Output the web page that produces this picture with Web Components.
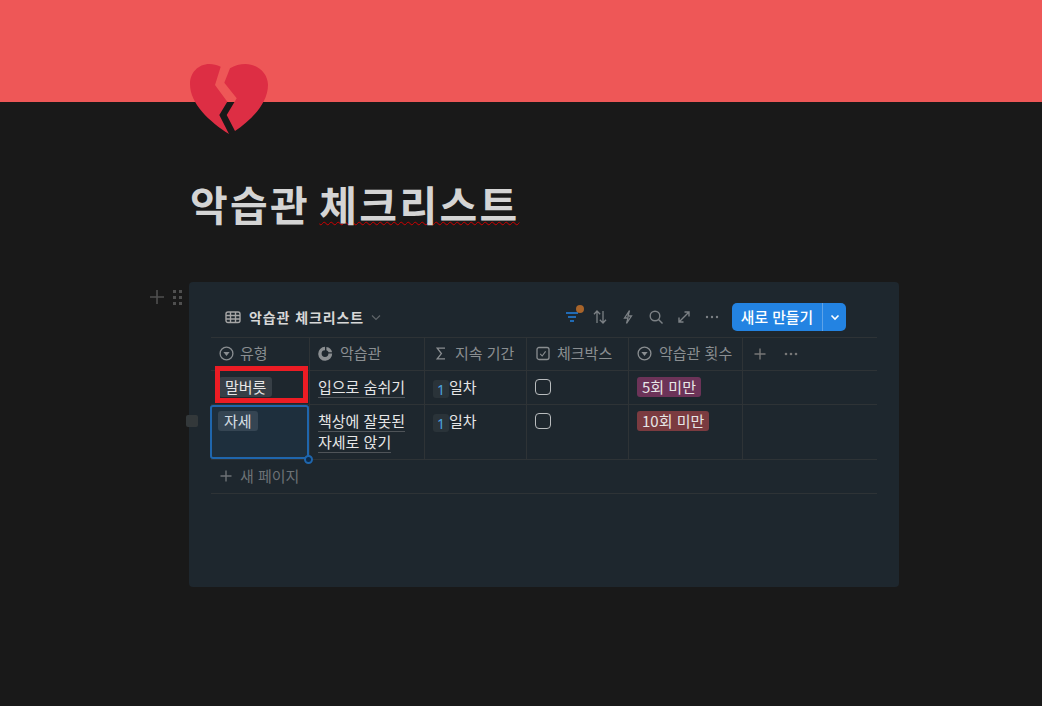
<!DOCTYPE html>
<html lang="ko">
<head>
<meta charset="utf-8">
<title>악습관 체크리스트</title>
<style>
    html, body { margin: 0; height: 100%; background: #191919; overflow: hidden; }
    body { font-family: 'Noto Sans CJK KR', 'Noto Sans', sans-serif; color: #d4d4d4; }
</style>
</head>
<body>
<page-cover></page-cover>
<page-title></page-title>
<db-block>
    <db-toolbar></db-toolbar>
    <db-table></db-table>
</db-block>

<script>
const FONT = "'Noto Sans CJK KR', 'Noto Sans', sans-serif";

const ICONS = {
    select: `<svg width="15" height="15" viewBox="0 0 15 15"><circle cx="7.5" cy="7.5" r="6.4" fill="none" stroke="currentColor" stroke-width="1.3"/><path d="M4.4 6h6.2L7.5 10z" fill="currentColor"/></svg>`,
    rollup: `<svg width="15" height="15" viewBox="0 0 15 15"><path d="M7 .8v3.4a3.4 3.4 0 1 0 3.4 3.4h3.8A7 7 0 1 1 7 .8z" fill="currentColor"/><path d="M8.4 .9a6.6 6.6 0 0 1 5.7 5.4h-3.5a3.3 3.3 0 0 0-2.2-2z" fill="currentColor"/></svg>`,
    sigma: `<svg width="15" height="15" viewBox="0 0 15 15"><path d="M12 2.200H4.200L8.400 7.600l-4.200 5.200H12" fill="none" stroke="currentColor" stroke-width="1.3"/></svg>`,
    check: `<svg width="15" height="15" viewBox="0 0 15 15"><rect x="2" y="1.500" width="12" height="12" rx="2" fill="none" stroke="currentColor" stroke-width="1.3"/><path d="M5.200 7.800l2 2.200 3.400-4.600" fill="none" stroke="currentColor" stroke-width="1.100"/></svg>`
};

// Cover band with the page icon hanging over its lower edge
class PageCover extends HTMLElement {
    constructor() {
        super();
        this.attachShadow({ mode: 'open' });
        this.shadowRoot.innerHTML = `
            <style>
                :host { display: block; height: 102px; background: #ee5757; position: relative; }
                svg { position: absolute; left: 190px; top: 64px; }
            </style>
            <svg width="78" height="71" viewBox="0 0 78 71">
                <path fill="#dd2e44" d="M30.700 2.700C27 .8 23 0 19.500 0 8 0 0 9 0 20 0 40 20 58 39 70L29.300 51 37.300 37.700 25 21z"/>
                <path fill="#dd2e44" d="M40 4.300C44.500 1.500 50 0 55.500 0 68 0 78 9.500 78 21 78 40 60 57 45 67L36.700 51 46.700 34.300 34.300 18.700z"/>
            </svg>`;
    }
}
customElements.define('page-cover', PageCover);

class PageTitle extends HTMLElement {
    constructor() {
        super();
        this.attachShadow({ mode: 'open' });
        this.shadowRoot.innerHTML = `
            <style>
                :host {
                    display: block;
                    padding: 72px 0 0 190px;
                    height: 108px;
                    font: 700 41px/58px ${FONT};
                    letter-spacing: 2.3px;
                    word-spacing: -4.500px;
                    color: #d4d4d4;
                }
                span { text-decoration: underline wavy #d00000 1.3px; text-underline-offset: 0; text-decoration-skip-ink: none; }
            </style>
            악습관 <span>체크리스트</span>`;
    }
}
customElements.define('page-title', PageTitle);

// Dark card that holds the toolbar and the table, with the hover handle at its left
class DbBlock extends HTMLElement {
    constructor() {
        super();
        this.attachShadow({ mode: 'open' });
        this.shadowRoot.innerHTML = `
            <style>
                :host {
                    display: block;
                    box-sizing: border-box;
                    width: 710px;
                    height: 305px;
                    margin-left: 189px;
                    padding: 21px 22px 0;
                    background: #1e272e;
                    border-radius: 4px;
                    position: relative;
                }
                .handle { position: absolute; left: -40px; top: 6px; display: flex; gap: 7px; color: #4f4f4f; }
            </style>
            <div class="handle">
                <svg width="16" height="18" viewBox="0 0 16 18"><path d="M8 2v14M1 9h14" stroke="currentColor" stroke-width="1.6"/></svg>
                <svg width="10" height="18" viewBox="0 0 10 18" fill="currentColor">
                    <rect x="1" y="2" width="3" height="3"/><rect x="7" y="2" width="3" height="3"/>
                    <rect x="1" y="8" width="3" height="3"/><rect x="7" y="8" width="3" height="3"/>
                    <rect x="1" y="14" width="3" height="3"/><rect x="7" y="14" width="3" height="3"/>
                </svg>
            </div>
            <slot></slot>`;
    }
}
customElements.define('db-block', DbBlock);

class DbToolbar extends HTMLElement {
    constructor() {
        super();
        this.attachShadow({ mode: 'open' });
        this.shadowRoot.innerHTML = `
            <style>
                :host {
                    display: flex;
                    align-items: center;
                    height: 28px;
                    margin-bottom: 6px;
                    padding-left: 14px;
                    font-family: ${FONT};
                    color: #7c8185;
                }
                .view { display: flex; align-items: center; gap: 8px; font-size: 14px; font-weight: 700; letter-spacing: .9px; color: #d8d8d8; }
                .view svg { color: #a5a5a5; }
                .view .caret { color: #5f6468; margin-left: -2px; }
                .tools { margin-left: auto; display: flex; align-items: center; gap: 12px; }
                .filter { position: relative; display: flex; }
                .dot { position: absolute; right: -4px; top: -4px; width: 8px; height: 8px; border-radius: 50%; background: #a8642a; }
                .btn {
                    display: flex;
                    align-items: center;
                    height: 28px;
                    background: #2383e2;
                    border-radius: 5px;
                    color: #fff;
                    font-size: 14.8px;
                    font-weight: 500;
                }
                .btn span { padding: 0 9px; border-right: 1px solid #5ea3e8; line-height: 27px; height: 28px; }
                .btn svg { margin: 0 6.500px; }
                .end { width: 31px; }
            </style>
            <div class="view">
                <svg width="16" height="14" viewBox="0 0 16 14" fill="none" stroke="currentColor" stroke-width="1.4"><rect x="1" y="2" width="14" height="10.500" rx="2"/><path d="M1 5.500h14M1 9h14M5.500 2v10.500M10.500 2v10.500"/></svg>
                <span>악습관 체크리스트</span>
                <svg class="caret" width="12" height="12" viewBox="0 0 12 12" fill="none" stroke="currentColor" stroke-width="1.2"><path d="M2 4.500l4 4 4-4"/></svg>
            </div>
            <div class="tools">
                <div class="filter">
                    <svg width="16" height="16" viewBox="0 0 16 16" fill="none" stroke="#2383e2" stroke-width="1.5"><path d="M2 4h12M4 8h8M6 12h4"/></svg>
                    <i class="dot"></i>
                </div>
                <svg width="16" height="16" viewBox="0 0 16 16" fill="none" stroke="currentColor" stroke-width="1.3"><path d="M5 14V2M2 5.200L5 2l3.200 3.200M11 2v12M7.800 10.800L11 14l3 -3.200"/></svg>
                <svg width="16" height="16" viewBox="0 0 16 16" fill="none" stroke="currentColor" stroke-width="1.3"><path d="M9.500 1.500L4.500 9H8l-1.500 5.500L11.500 7H8z"/></svg>
                <svg width="16" height="16" viewBox="0 0 16 16" fill="none" stroke="currentColor" stroke-width="1.4"><circle cx="7" cy="7" r="4.800"/><path d="M10.500 10.500L14.500 14.500"/></svg>
                <svg width="16" height="16" viewBox="0 0 16 16" fill="none" stroke="currentColor" stroke-width="1.4"><path d="M3 13L13 3M8.500 3H13v4.500M3 8.500V13h4.500"/></svg>
                <svg width="16" height="16" viewBox="0 0 16 16" fill="currentColor"><circle cx="3" cy="8" r="1.200"/><circle cx="8" cy="8" r="1.200"/><circle cx="13" cy="8" r="1.200"/></svg>
                <div class="btn">
                    <span>새로 만들기</span>
                    <svg width="10" height="10" viewBox="0 0 10 10" fill="none" stroke="#fff" stroke-width="1.6"><path d="M1.500 3.500L5 7l3.500-3.500"/></svg>
                </div>
            </div>
            <div class="end"></div>`;
    }
}
customElements.define('db-toolbar', DbToolbar);

class TagPill extends HTMLElement {
    constructor() {
        super();
        this.attachShadow({ mode: 'open' });
        this.shadowRoot.innerHTML = `
            <style>
                :host {
                    display: inline-block;
                    vertical-align: top;
                    padding: 0 var(--pad, 6px);
                    height: 20px;
                    line-height: 19px;
                    border-radius: 3px;
                    font-size: 15px;
                    color: #e6e6e6;
                    background: var(--tag, #373f46);
                    white-space: nowrap;
                }
            </style><slot></slot>`;
    }
}
customElements.define('tag-pill', TagPill);

class DbTable extends HTMLElement {
    constructor() {
        super();
        this.attachShadow({ mode: 'open' });
        const head = [
            ['select', '유형'], ['rollup', '악습관'], ['sigma', '지속 기간'],
            ['check', '체크박스'], ['select', '악습관 횟수']
        ];
        const days = `<span class="num"><b>1</b>일차</span>`;
        const box = `<i class="box"></i>`;
        this.shadowRoot.innerHTML = `
            <style>
                :host {
                    display: block;
                    position: relative;
                    font-family: ${FONT};
                    font-size: 15px;
                    color: #e6e6e6;
                }
                .row {
                    display: grid;
                    grid-template-columns: 99px 115px 102px 102px 114px 134px;
                    border-bottom: 1px solid #2e3336;
                }
                .row.top { border-top: 1px solid #2e3336; height: 32px; }
                .row.r1 { height: 33px; }
                .row.r2 { height: 54px; }
                .cell { box-sizing: border-box; padding: 5px 8px 0; border-right: 1px solid #2e3336; line-height: 21px; }
                .cell:last-child { border-right: 0; }
                .pad { padding-top: 6px; }
                .th { display: flex; align-items: center; gap: 7px; color: #8a8e91; padding: 0 8px 1px; }
                .th:first-child { gap: 6px; }
                .th span { margin-bottom: 2px; }
                .tools { gap: 17px; padding-left: 10px; }
                .tools svg { color: #777; }
                .title span {
                    border-bottom: 1px solid #4f5459;
                }
                .num { display: flex; align-items: flex-start; }
                .num b {
                    width: 16px;
                    height: 18px;
                    margin-top: 4px;
                    text-align: center;
                    background: #2a3339;
                    border-radius: 3px;
                    color: #4aa3e0;
                    font: 400 14px/19px 'Noto Sans', sans-serif;
                }
                .box {
                    display: block;
                    box-sizing: border-box;
                    width: 16px;
                    height: 16px;
                    margin-top: 3px;
                    border: 1.5px solid #b9bcbe;
                    border-radius: 4px;
                }
                .add { box-sizing: border-box; display: flex; align-items: center; gap: 7px; height: 34px; padding: 0 0 2px 8px; color: #6d7276; border-bottom: 1px solid #2e3336; }
                .selected { position: absolute; left: -1px; top: 68px; width: 99px; height: 54px; box-sizing: border-box; border: 2px solid #1f66ad; border-radius: 3px; background: rgba(35,131,226,.09); }
                .selected::after { content: ''; position: absolute; right: -6px; bottom: -7px; width: 5px; height: 5px; background: #0c2b4b; border: 2px solid #1f66ad; border-radius: 50%; }
                .mark { position: absolute; left: 4px; top: 29px; width: 93px; height: 37px; box-sizing: border-box; border: 5px solid #ec1c24; }
                .rowhandle { position: absolute; left: -25px; top: 78px; width: 12px; height: 12px; border-radius: 2px; background: #33383a; }
            </style>
            <div class="row top">
                ${head.map(([ic, t]) => `<div class="cell th">${ICONS[ic]}<span>${t}</span></div>`).join('')}
                <div class="cell th tools">
                    <svg width="14" height="14" viewBox="0 0 14 14"><path d="M7 1.500v11M1.500 7h11" stroke="currentColor" stroke-width="1.400"/></svg>
                    <svg width="14" height="14" viewBox="0 0 14 14" fill="currentColor"><circle cx="2" cy="7" r="1.300"/><circle cx="7" cy="7" r="1.300"/><circle cx="12" cy="7" r="1.300"/></svg>
                </div>
            </div>
            <div class="row r1">
                <div class="cell pad"><tag-pill>말버릇</tag-pill></div>
                <div class="cell title"><span>입으로 숨쉬기</span></div>
                <div class="cell">${days}</div>
                <div class="cell">${box}</div>
                <div class="cell pad"><tag-pill style="--tag:#6c3358;--pad:5px">5회 미만</tag-pill></div>
                <div class="cell"></div>
            </div>
            <div class="row r2">
                <div class="cell pad" style="padding-left:7px"><tag-pill>자세</tag-pill></div>
                <div class="cell title"><span>책상에 잘못된</span><br><span>자세로 앉기</span></div>
                <div class="cell">${days}</div>
                <div class="cell">${box}</div>
                <div class="cell pad"><tag-pill style="--tag:#7b3b40;--pad:5px">10회 미만</tag-pill></div>
                <div class="cell"></div>
            </div>
            <div class="add">
                <svg width="14" height="14" viewBox="0 0 14 14"><path d="M7 1.500v11M1.500 7h11" stroke="currentColor" stroke-width="1.400"/></svg>
                <span>새 페이지</span>
            </div>
            <div class="selected"></div>
            <div class="mark"></div>
            <div class="rowhandle"></div>`;
    }
}
customElements.define('db-table', DbTable);
</script>
</body>
</html>
